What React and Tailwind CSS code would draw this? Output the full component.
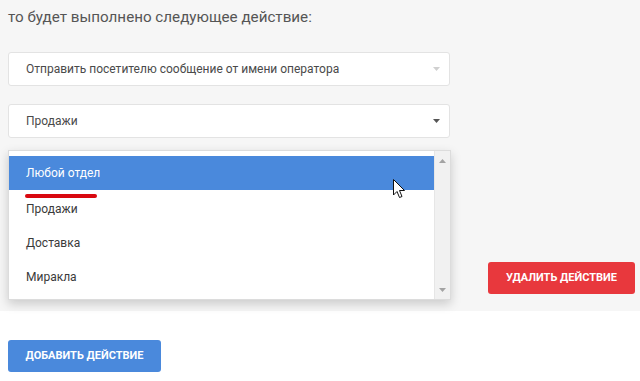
import React from "react";

function Caret({ color }) {
  return (
    <svg width="7" height="4" viewBox="0 0 7 4" className="block">
      <path d="M0 0 L7 0 L3.5 4 Z" fill={color} />
    </svg>
  );
}

function Select({ label, caret }) {
  return (
    <div className="h-[34px] w-[442px] rounded-[3px] border border-[#e3e3e3] bg-white flex items-center justify-between pl-[17px] pr-[9px] text-[12px] text-[#4a4a4a]">
      <span>{label}</span>
      <Caret color={caret} />
    </div>
  );
}

export default function App() {
  return (
    <div className="relative w-[640px] h-[381px] bg-white overflow-hidden font-['Roboto','Noto_Sans',sans-serif]">
      <div className="bg-[#f6f6f6] pl-2 pr-[5px] pt-[5px] pb-[17px]">
        <div className="text-[15.2px] leading-6 text-[#555]">то будет выполнено следующее действие:</div>
        <div className="mt-[23px]">
          <Select label="Отправить посетителю сообщение от имени оператора" caret="#d0d0d0" />
        </div>
        <div className="mt-[18px]">
          <Select label="Продажи" caret="#555" />
        </div>
        <div className="mt-[124px] flex justify-end">
          <button className="h-[32px] w-[147px] rounded-[3px] bg-[#e8383d] text-white text-[11px] font-bold uppercase">
            Удалить действие
          </button>
        </div>
      </div>
      <div className="px-2 pt-[29px]">
        <button className="h-[32px] w-[153px] rounded-[3px] bg-[#4a89dc] text-white text-[11px] font-bold uppercase">
          Добавить действие
        </button>
      </div>

      {/* dropdown list */}
      <div className="absolute left-2 top-[150px] w-[443px] h-[150px] bg-white border border-[#dcdcdc] shadow-[0_4px_10px_rgba(0,0,0,0.18)] flex text-[12px]">
        <div className="flex-1 pt-[5px]">
          <div className="h-[34px] bg-[#4a89dc] text-white flex items-center pl-[17px]">Любой отдел</div>
          <div className="pt-[2px] text-[#3a3a3a]">
            <div className="h-[34px] flex items-center pl-[17px]">Продажи</div>
            <div className="h-[34px] flex items-center pl-[17px]">Доставка</div>
            <div className="h-[34px] flex items-center pl-[17px]">Миракла</div>
          </div>
        </div>
        <div className="w-[16px] bg-[#f1f1f1] border-l border-[#e6e6e6] flex flex-col items-center justify-between pt-[8px] pb-[7px]">
          <svg width="7" height="4" viewBox="0 0 7 4"><path d="M0 4 L7 4 L3.5 0 Z" fill="#a3a3a3" /></svg>
          <svg width="7" height="4" viewBox="0 0 7 4"><path d="M0 0 L7 0 L3.5 4 Z" fill="#a3a3a3" /></svg>
        </div>
      </div>

      {/* red annotation underline */}
      <div className="absolute left-[25px] top-[194px] w-[72px] h-[4px] rounded-full bg-[#d9080f]" />

      {/* mouse cursor */}
      <svg className="absolute left-[393px] top-[179px]" width="13" height="21" viewBox="0 0 13 21">
        <path d="M0.5 0.5 L0.5 16 L4 12.5 L6.5 18.5 L9 17.5 L6.5 11.5 L11.5 11.5 Z" fill="#fff" stroke="#111" strokeWidth="1" strokeLinejoin="miter" />
      </svg>
    </div>
  );
}
